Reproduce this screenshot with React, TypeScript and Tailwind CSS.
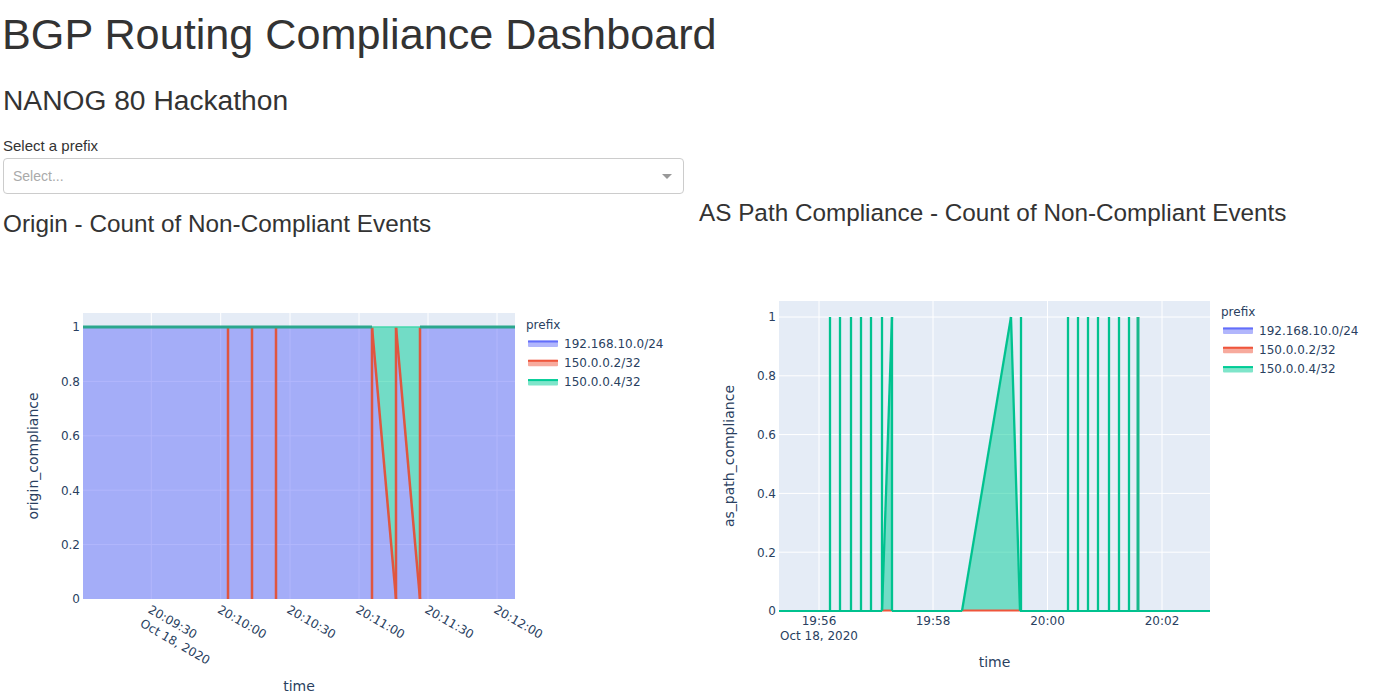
import React from 'react';

const TICK = '#2a3f5f';
const PLOT_BG = '#e5ecf6';
const FONT = "'DejaVu Sans', Verdana, sans-serif";

const legendItems = [
  { label: '192.168.10.0/24', line: '#636efa', fill: 'rgba(99,110,250,0.5)' },
  { label: '150.0.0.2/32', line: '#ef553b', fill: 'rgba(239,85,59,0.5)' },
  { label: '150.0.0.4/32', line: '#00cc96', fill: 'rgba(0,204,150,0.5)' },
];

const yTicks = [0, 0.2, 0.4, 0.6, 0.8, 1];

// legend drawn the way plotly does it for area traces: fill swatch + line on top
const Legend: React.FC<{ x: number; y: number }> = ({ x, y }) => (
  <g transform={`translate(${x},${y})`} fontFamily={FONT} fontSize={12} fill={TICK}>
    <text x={0} y={4}>prefix</text>
    {legendItems.map((item, i) => {
      const cy = 18.5 + i * 19.3;
      return (
        <g key={item.label}>
          <rect x={2} y={cy - 3} width={30} height={6.5} rx={1} fill={item.fill} />
          <line x1={2} x2={32} y1={cy - 2} y2={cy - 2} stroke={item.line} strokeWidth={2} />
          <text x={38} y={cy + 4.3}>{item.label}</text>
        </g>
      );
    })}
  </g>
);

const OriginChart: React.FC = () => {
  const L = 83, R = 515, T = 73, B = 359;
  const y = (v: number) => B - v * 272;
  const top = y(1);
  const xTicks: [string, number][] = [
    ['20:09:30', 151.3],
    ['20:10:00', 220.7],
    ['20:10:30', 290],
    ['20:11:00', 359],
    ['20:11:30', 428],
    ['20:12:00', 497],
  ];
  const redVerticals = [228, 252, 276, 372, 396, 420];
  const red = '#e0563f';

  return (
    <svg width={689} height={458} className="-ml-[3px] block">
      <rect x={L} y={T} width={R - L} height={B - T} fill={PLOT_BG} />
      {xTicks.map(([, x]) => (
        <line key={x} x1={x} x2={x} y1={T} y2={B} stroke="#fff" strokeWidth={1} />
      ))}
      {yTicks.slice(1).map((v) => (
        <line key={v} x1={L} x2={R} y1={y(v)} y2={y(v)} stroke="#fff" strokeWidth={1} />
      ))}

      {/* 192.168.10.0/24 area */}
      <path
        d={`M${L},${B} L${L},${top} L372,${top} L396,${B} L396,${top} L420,${B} L420,${top} L${R},${top} L${R},${B} Z`}
        fill="rgba(99,110,250,0.5)"
      />
      {/* 150.0.0.4/32 area */}
      <path d={`M372,${top} L396,${B} L396,${top} Z M396,${top} L420,${B} L420,${top} Z`} fill="rgba(0,204,150,0.5)" />

      {/* 150.0.0.2/32 line */}
      <g stroke={red} strokeWidth={2.5}>
        {redVerticals.map((x) => (
          <line key={x} x1={x} x2={x} y1={top} y2={B} />
        ))}
        <line x1={372} y1={top} x2={396} y2={B} />
        <line x1={396} y1={top} x2={420} y2={B} />
      </g>

      {/* 150.0.0.4/32 line */}
      <path d={`M${L},${top} H372 M420,${top} H${R}`} stroke="#2ba78d" strokeWidth={3} fill="none" />
      <path d={`M372,${top} H420`} stroke="#3fd4aa" strokeWidth={1.5} fill="none" />

      <g fontFamily={FONT} fontSize={12} fill={TICK}>
        {yTicks.map((v) => (
          <text key={v} x={L - 3} y={y(v) + 4.3} textAnchor="end">
            {v}
          </text>
        ))}
        {xTicks.map(([label, x]) => (
          <text key={label} transform={`translate(${x - 4},372) rotate(30)`}>
            <tspan x={0} y={0}>{label}</tspan>
            {label === '20:09:30' && (
              <tspan x={0} dy={16}>
                Oct 18, 2020
              </tspan>
            )}
          </text>
        ))}
      </g>

      <g fontFamily={FONT} fontSize={14} fill={TICK}>
        <text x={(L + R) / 2} y={451} textAnchor="middle">time</text>
        <text transform={`translate(${L - 45},${(T + B) / 2}) rotate(-90)`} textAnchor="middle">
          origin_compliance
        </text>
      </g>

      <Legend x={526} y={85} />
    </svg>
  );
};

const AsPathChart: React.FC = () => {
  const L = 90, R = 521, T = 72, B = 382;
  const y = (v: number) => B - v * 294;
  const top = y(1);
  const xTicks: [string, number][] = [
    ['19:56', 130],
    ['19:58', 244],
    ['20:00', 358.5],
    ['20:02', 473],
  ];
  const spikes = [141, 151, 162, 172, 182, 193, 203, 332, 379, 389, 399, 409, 420, 430, 440];
  const green = '#00c28f';

  return (
    <svg width={689} height={458} className="block">
      <rect x={L} y={T} width={R - L} height={B - T} fill={PLOT_BG} />
      {xTicks.map(([, x]) => (
        <line key={x} x1={x} x2={x} y1={T} y2={B} stroke="#fff" strokeWidth={1} />
      ))}
      {yTicks.slice(1).map((v) => (
        <line key={v} x1={L} x2={R} y1={y(v)} y2={y(v)} stroke="#fff" strokeWidth={1} />
      ))}

      {/* 150.0.0.4/32 area */}
      <path d={`M193,${B} L203,${top} L203,${B} Z M273,${B} L322,${top} L331,${B} Z`} fill="rgba(0,204,150,0.5)" />

      {/* 150.0.0.2/32 sits at 0 */}
      <path d={`M193,${B - 0.5} H203 M273,${B - 0.5} H331`} stroke="#ef553b" strokeWidth={2} fill="none" />

      {/* 150.0.0.4/32 line */}
      <g stroke={green} strokeWidth={2.3} fill="none">
        <path d={`M${L},${B} H193 M203,${B} H273 M331,${B} H${R}`} strokeWidth={2} />
        {spikes.map((x) => (
          <line key={x} x1={x} x2={x} y1={top} y2={B} />
        ))}
        <line x1={193} y1={B} x2={203} y2={top} />
        <line x1={273} y1={B} x2={322} y2={top} />
        <line x1={322} y1={top} x2={331} y2={B} />
        <line x1={449} x2={449} y1={top} y2={B} strokeWidth={3} stroke="#19b88a" />
      </g>

      <g fontFamily={FONT} fontSize={12} fill={TICK}>
        {yTicks.map((v) => (
          <text key={v} x={L - 3} y={y(v) + 4.3} textAnchor="end">
            {v}
          </text>
        ))}
        {xTicks.map(([label, x]) => (
          <text key={label} x={x} y={395.5} textAnchor="middle">
            {label}
          </text>
        ))}
        <text x={130} y={411} textAnchor="middle">Oct 18, 2020</text>
      </g>

      <g fontFamily={FONT} fontSize={14} fill={TICK}>
        <text x={(L + R) / 2} y={438} textAnchor="middle">time</text>
        <text transform={`translate(${L - 45},${(T + B) / 2}) rotate(-90)`} textAnchor="middle">
          as_path_compliance
        </text>
      </g>

      <Legend x={532} y={83} />
    </svg>
  );
};

export default function App() {
  return (
    <div className="flex h-[698px] w-full overflow-hidden bg-white font-['Liberation_Sans',Arial,sans-serif] text-[#333]">
      <div className="w-[689px] shrink-0 pl-[3px]">
        <h1 className="-ml-[1px] whitespace-nowrap text-[43.2px] leading-[69px]">BGP Routing Compliance Dashboard</h1>
        <h2 className="mt-[11px] text-[28.2px] leading-[40px]">NANOG 80 Hackathon</h2>
        <label className="mt-[16px] block text-[15px] leading-[20px]">Select a prefix</label>
        <div className="mt-[2px] flex h-[36px] w-[681px] items-center rounded-[4px] border border-[#ccc] bg-white pl-[9px]">
          <span className="flex-1 text-[14px] text-[#aaa]">Select...</span>
          <span className="mr-[11px] h-0 w-0 border-x-[5px] border-t-[5px] border-x-transparent border-t-[#999]" />
        </div>
        <h3 className="mt-[14px] whitespace-nowrap text-[24.3px] leading-[32px]">Origin - Count of Non-Compliant Events</h3>
        <OriginChart />
      </div>
      <div className="min-w-0 flex-1 pt-[197px]">
        <h3 className="whitespace-nowrap pl-[10px] text-[24.3px] leading-[32px]">
          AS Path Compliance - Count of Non-Compliant Events
        </h3>
        <AsPathChart />
      </div>
    </div>
  );
}
